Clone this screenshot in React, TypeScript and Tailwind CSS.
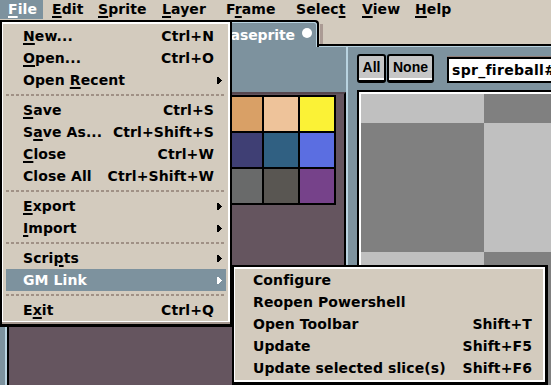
import React from "react";

const db32 = [
  "#000000", "#222034", "#45283c", "#663931", "#8f563b", "#df7126", "#d9a066", "#eec39a", "#fbf236",
  "#99e550", "#6abe30", "#37946e", "#4b692f", "#524b24", "#323c39", "#3f3f74", "#306082", "#5b6ee1",
  "#639bff", "#5fcde4", "#cbdbfc", "#ffffff", "#9badb7", "#847e87", "#696a6a", "#595652", "#76428a",
  "#ac3232", "#d95763", "#d77bba", "#8f974a", "#8a6f30",
];

function Mn({ text, u }: { text: string; u?: number }) {
  if (u === undefined) return <span className="whitespace-pre">{text}</span>;
  return (
    <span className="whitespace-pre">
      {text.slice(0, u)}
      <span className="underline decoration-2 underline-offset-[2px]">{text[u]}</span>
      {text.slice(u + 1)}
    </span>
  );
}

function Arrow({ white }: { white?: boolean }) {
  const c = white ? "#ffffff" : "#000000";
  return (
    <svg width="5" height="7" viewBox="0 0 5 7" shapeRendering="crispEdges" className="absolute right-[4px] top-[8px]">
      <rect x="0" y="0" width="2" height="7" fill={c} />
      <rect x="2" y="1" width="1" height="5" fill={c} />
      <rect x="3" y="2" width="1" height="3" fill={c} />
      <rect x="4" y="3" width="1" height="1" fill={c} />
    </svg>
  );
}

type Item = { t: string; u?: number; k?: string; arrow?: boolean; hl?: boolean } | "sep";

const fileItems: Item[] = [
  { t: "New...", u: 0, k: "Ctrl+N" },
  { t: "Open...", u: 0, k: "Ctrl+O" },
  { t: "Open Recent", u: 5, arrow: true },
  "sep",
  { t: "Save", u: 0, k: "Ctrl+S" },
  { t: "Save As...", u: 1, k: "Ctrl+Shift+S" },
  { t: "Close", u: 0, k: "Ctrl+W" },
  { t: "Close All", k: "Ctrl+Shift+W" },
  "sep",
  { t: "Export", u: 0, arrow: true },
  { t: "Import", u: 0, arrow: true },
  "sep",
  { t: "Scripts", u: 4, arrow: true },
  { t: "GM Link", arrow: true, hl: true },
  "sep",
  { t: "Exit", u: 1, k: "Ctrl+Q" },
];

const gmItems = [
  { t: "Configure", k: "" },
  { t: "Reopen Powershell", k: "" },
  { t: "Open Toolbar", k: "Shift+T" },
  { t: "Update", k: "Shift+F5" },
  { t: "Update selected slice(s)", k: "Shift+F6" },
];

const menus = [
  { t: "File", u: 0, cls: "w-[43px] pl-[8px] bg-[#7d929e] text-white" },
  { t: "Edit", u: 0, cls: "w-[46px] pl-[9px]" },
  { t: "Sprite", u: 0, cls: "w-[64px] pl-[9px]" },
  { t: "Layer", u: 0, cls: "w-[64px] pl-[9px]" },
  { t: "Frame", u: 1, cls: "w-[70px] pl-[9px]" },
  { t: "Select", u: 5, cls: "w-[66px] pl-[9px]" },
  { t: "View", u: 0, cls: "w-[53px] pl-[9px]" },
  { t: "Help", u: 0, cls: "w-[50px] pl-[9px]" },
];

export default function App() {
  return (
    <div className="relative w-[551px] h-[385px] overflow-hidden bg-[#7d929e] font-['DejaVu_Sans',sans-serif] font-bold text-[14px] tracking-[0.1px] text-black flex flex-col">
      {/* menubar */}
      <div className="h-[20px] shrink-0 bg-[#d3cbbe] flex items-start">
        {menus.map((m) => (
          <div key={m.t} className={`h-[19px] leading-[19px] ${m.cls}`}>
            <Mn text={m.t} u={m.u} />
          </div>
        ))}
      </div>

      {/* tab bar */}
      <div className="h-[27px] shrink-0 bg-[#d3cbbe] flex">
        <div className="w-[319px] shrink-0 bg-[#7d929e] border-t-2 border-r-2 border-black rounded-tr-[4px] shadow-[inset_-1px_1px_0_#b9d3e0] flex justify-end items-start pr-[5px] pt-[5px] text-white leading-[17px] whitespace-nowrap">
          <span className="tracking-[-0.1px]">aseprite</span>
          <span className="ml-[7px] mt-[1px] w-[10px] h-[10px] rounded-full bg-white shrink-0" />
        </div>
        <div className="flex-1 flex flex-col">
          <div className="flex-1 flex">
            <div className="w-[3px] mt-[4px] ml-[1px] bg-[#ab9b94]" />
          </div>
          <div className="h-[2px] bg-black" />
          <div className="h-[1px] bg-[#b9d3e0]" />
        </div>
      </div>

      {/* workspace */}
      <div className="flex-1 min-h-0 flex">
        {/* palette column */}
        <div className="w-[346px] shrink-0 pl-[5px] flex flex-col">
          <div className="h-[45px] shrink-0" />
          <div className="flex-1 border-l-2 border-[#b9d3e0] flex">
            <div className="flex-1 border-x-2 border-black border-t-2 border-t-[#56474f] bg-[#65555f]">
              <div className="ml-[1px] mt-[1px]">
                <div className="w-fit bg-black p-[2px] grid grid-cols-[repeat(9,34px)] auto-rows-[34px] gap-[2px]">
                  {db32.slice(0, 27).map((c, i) => (
                    <div key={i} style={{ backgroundColor: c }} />
                  ))}
                </div>
                <div className="w-fit bg-black px-[2px] pb-[2px] grid grid-cols-[repeat(5,34px)] auto-rows-[34px] gap-[2px]">
                  {db32.slice(27).map((c, i) => (
                    <div key={i} style={{ backgroundColor: c }} />
                  ))}
                </div>
              </div>
            </div>
          </div>
        </div>

        {/* editor column */}
        <div className="flex-1 min-w-0 border-l-2 border-[#b9d3e0] pl-[9px] pt-[7px] flex flex-col">
          <div className="h-[29px] shrink-0 flex items-start font-['Liberation_Sans',sans-serif] tracking-normal">
            <div className="w-[29px] h-[29px] shrink-0 border-2 border-b-[3px] border-black rounded-[3px] bg-[#c6c6c6] shadow-[inset_0_-2px_0_#ffffff] text-center leading-[22px]">
              All
            </div>
            <div className="ml-[1px] w-[47px] h-[29px] shrink-0 border-2 border-b-[3px] border-black rounded-[3px] bg-[#c6c6c6] shadow-[inset_0_-2px_0_#ffffff] text-center leading-[22px]">
              None
            </div>
            <div className="ml-[13px] mt-[3px] w-[200px] h-[26px] shrink-0 border-2 border-black bg-white shadow-[0_-1px_0_#8e7d77] pl-[3px] leading-[22px] whitespace-nowrap overflow-hidden font-['DejaVu_Sans',sans-serif] tracking-[0.3px]">
              spr_fireball#frame
            </div>
          </div>
          <div className="mt-[7px] flex-1 min-h-0 border-t-2 border-l-2 border-black">
            <div className="h-full border-t-2 border-l-2 border-white grid grid-cols-[123px_1fr] grid-rows-[29px_129px_1fr]">
              <div className="bg-[#c0c0c0]" />
              <div className="bg-[#808080]" />
              <div className="bg-[#808080]" />
              <div className="bg-[#c0c0c0]" />
              <div className="bg-[#c0c0c0]" />
              <div className="bg-[#808080]" />
            </div>
          </div>
        </div>
      </div>

      {/* File menu */}
      <div className="absolute left-0 top-[20px] w-[232px] border-2 border-b-[3px] border-black bg-[#d3cbbe]">
        <div className="border-l border-t-2 border-r-2 border-b border-white pl-[3px] pr-[2px] pt-[1px]">
          {fileItems.map((it, i) =>
            it === "sep" ? (
              <div key={i} className="h-[8px] flex items-center">
                <div className="h-[2px] w-full bg-[repeating-linear-gradient(90deg,#a09186_0_3px,transparent_3px_5px)]" />
              </div>
            ) : (
              <div
                key={i}
                className={`relative h-[22px] leading-[22px] flex pl-[17px] pr-[12px] whitespace-nowrap ${it.hl ? "bg-[#7d929e] text-white" : ""}`}
              >
                <Mn text={it.t} u={it.u} />
                <span className="flex-1" />
                {it.k && <span>{it.k}</span>}
                {it.arrow && <Arrow white={it.hl} />}
              </div>
            )
          )}
        </div>
        <div className="h-[2px] bg-[#a59890]" />
      </div>

      {/* GM Link submenu */}
      <div className="absolute left-[232px] top-[265px] w-[316px] border-l-2 border-t-2 border-r-[3px] border-b-[3px] border-black bg-[#d3cbbe]">
        <div className="border-l border-t-2 border-r-2 border-b-2 border-white px-[1px] pb-[1px]">
          {gmItems.map((it) => (
            <div key={it.t} className="h-[22px] leading-[22px] flex pl-[17px] pr-[10px] whitespace-nowrap">
              <span className="whitespace-pre">{it.t}</span>
              <span className="flex-1" />
              {it.k && <span>{it.k}</span>}
            </div>
          ))}
        </div>
      </div>
    </div>
  );
}
